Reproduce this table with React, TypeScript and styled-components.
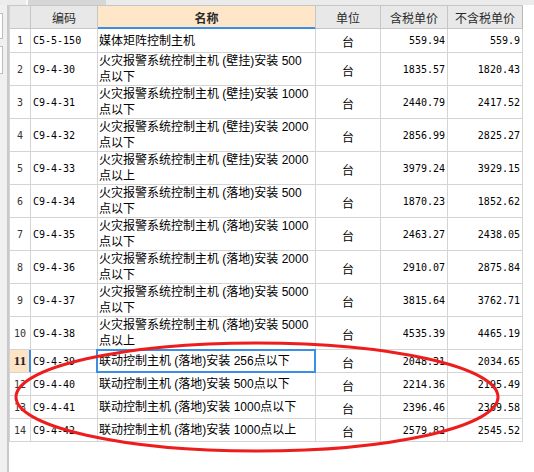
import React from "react";
import styled, { createGlobalStyle, css } from "styled-components";

const COLS = "21px 67px 218px 65px 67px 75px";
const GRID = "#d4d4d4";
const HEAD_LINE = "#c6c6c6";
const BLUE = "#3a8ee6";
const PEACH = "#fde4c6";

const GlobalStyle = createGlobalStyle`
  html, body { margin: 0; padding: 0; background: #ffffff; }
  body { font-family: "Noto Sans CJK SC", sans-serif; }
`;

const Page = styled.div`
  position: relative;
  width: 534px;
  height: 472px;
  display: flex;
  flex-direction: column;
  overflow: hidden;
  background: #ffffff;
`;

const TopStrip = styled.div`
  height: 5px;
  display: flex;
  flex-shrink: 0;
`;

const StripSeg = styled.div<{ $w?: number; $tone: string }>`
  ${(p) => (p.$w ? css`width: ${p.$w}px;` : css`flex: 1;`)}
  background: ${(p) => p.$tone};
`;

const Body = styled.div`
  flex: 1;
  display: flex;
  min-height: 0;
`;

const LeftPanel = styled.div`
  width: 7px;
  border-right: 2px solid #c9c9c9;
  background: #f0f0f0;
  display: flex;
  flex-direction: column;
  gap: 7px;
  padding-top: 8px;
  flex-shrink: 0;
`;

const PanelBox = styled.div<{ $h: number }>`
  width: 2px;
  height: ${(p) => p.$h}px;
  background: #ffffff;
  border: 1px solid #bdbdbd;
  border-left: none;
`;

const TableArea = styled.div`
  flex: 1;
  background: #ffffff;
`;

const Table = styled.div`
  display: flex;
  flex-direction: column;
  width: max-content;
  border-left: 1px solid ${GRID};
  border-top: 1px solid ${HEAD_LINE};
`;

const Row = styled.div<{ $h: number }>`
  display: grid;
  grid-template-columns: ${COLS};
  height: ${(p) => p.$h}px;
`;

const HeadCell = styled.div<{ $active?: boolean; $last?: boolean }>`
  box-sizing: border-box;
  display: flex;
  align-items: center;
  justify-content: center;
  background: ${(p) => (p.$active ? "#fee6c9" : "#e8e8e8")};
  border-right: 1px solid ${(p) => (p.$last ? "#b9b9b9" : HEAD_LINE)};
  border-bottom: 1px solid ${(p) => (p.$active ? BLUE : HEAD_LINE)};
  ${(p) => p.$active && css`box-shadow: inset 0 -1px 0 ${BLUE};`}
  font-family: "Noto Sans CJK SC", sans-serif;
  font-size: 12px;
  font-weight: ${(p) => (p.$active ? 700 : 400)};
  color: #2a2a2a;
  white-space: nowrap;
`;

const Cell = styled.div`
  box-sizing: border-box;
  display: flex;
  align-items: center;
  border-right: 1px solid ${GRID};
  border-bottom: 1px solid ${GRID};
  overflow: hidden;
  color: #000000;
  white-space: nowrap;
`;

const NumCell = styled(Cell)<{ $current?: boolean }>`
  justify-content: center;
  font-family: "DejaVu Sans Mono", "Liberation Mono", monospace;
  font-size: 10px;
  color: #333333;
  ${(p) =>
    p.$current &&
    css`
      background: ${PEACH};
      border-right-color: ${BLUE};
      box-shadow: inset -1px 0 0 ${BLUE};
      font-family: "Liberation Serif", serif;
      font-size: 13px;
      font-weight: 700;
      color: #222222;
    `}
`;

const CodeCell = styled(Cell)`
  padding-left: 2px;
  font-family: "DejaVu Sans Mono", "Liberation Mono", monospace;
  font-size: 10px;
`;

const NameCell = styled(Cell)<{ $selected?: boolean }>`
  position: relative;
  padding-left: 1px;
  font-family: "Liberation Sans", "Noto Sans CJK SC", sans-serif;
  font-size: 12px;
  line-height: 16px;
  ${(p) =>
    p.$selected &&
    css`
      overflow: visible;
      &::after {
        content: "";
        position: absolute;
        top: -1px;
        left: -2px;
        right: -1px;
        bottom: -1px;
        border: 2px solid ${BLUE};
        pointer-events: none;
      }
    `}
`;

const NameLines = styled.div`
  display: flex;
  flex-direction: column;
`;

const NameLine = styled.span`
  display: block;
  white-space: nowrap;
`;

const UnitCell = styled(Cell)`
  justify-content: center;
  padding-top: 2px;
  font-family: "Noto Sans CJK SC", sans-serif;
  font-size: 12px;
`;

const PriceCell = styled(Cell)`
  justify-content: flex-end;
  padding-right: 2px;
  font-family: "DejaVu Sans Mono", "Liberation Mono", monospace;
  font-size: 10px;
`;

const Overlay = styled.svg`
  position: absolute;
  left: 0;
  top: 0;
  pointer-events: none;
`;

type Item = { n: number; code: string; name: string[]; inc: string; ex: string };

const FA = "火灾报警系统控制主机 ";
const LD = "联动控制主机 (落地)安装 ";

const items: Item[] = [
  { n: 1, code: "C5-5-150", name: ["媒体矩阵控制主机"], inc: "559.94", ex: "559.9" },
  { n: 2, code: "C9-4-30", name: [FA + "(壁挂)安装 500", "点以下"], inc: "1835.57", ex: "1820.43" },
  { n: 3, code: "C9-4-31", name: [FA + "(壁挂)安装 1000", "点以下"], inc: "2440.79", ex: "2417.52" },
  { n: 4, code: "C9-4-32", name: [FA + "(壁挂)安装 2000", "点以下"], inc: "2856.99", ex: "2825.27" },
  { n: 5, code: "C9-4-33", name: [FA + "(壁挂)安装 2000", "点以上"], inc: "3979.24", ex: "3929.15" },
  { n: 6, code: "C9-4-34", name: [FA + "(落地)安装 500", "点以下"], inc: "1870.23", ex: "1852.62" },
  { n: 7, code: "C9-4-35", name: [FA + "(落地)安装 1000", "点以下"], inc: "2463.27", ex: "2438.05" },
  { n: 8, code: "C9-4-36", name: [FA + "(落地)安装 2000", "点以下"], inc: "2910.07", ex: "2875.84" },
  { n: 9, code: "C9-4-37", name: [FA + "(落地)安装 5000", "点以下"], inc: "3815.64", ex: "3762.71" },
  { n: 10, code: "C9-4-38", name: [FA + "(落地)安装 5000", "点以上"], inc: "4535.39", ex: "4465.19" },
  { n: 11, code: "C9-4-39", name: [LD + "256点以下"], inc: "2048.31", ex: "2034.65" },
  { n: 12, code: "C9-4-40", name: [LD + "500点以下"], inc: "2214.36", ex: "2195.49" },
  { n: 13, code: "C9-4-41", name: [LD + "1000点以下"], inc: "2396.46", ex: "2369.58" },
  { n: 14, code: "C9-4-42", name: [LD + "1000点以上"], inc: "2579.82", ex: "2545.52" },
];

const CURRENT = 11;

const rowHeight = (it: Item) => (it.n === 1 ? 24 : it.name.length > 1 ? 33 : 23);

export default function App() {
  return (
    <>
      <GlobalStyle />
      <Page>
        <TopStrip>
          <StripSeg $w={26} $tone="#ececec" />
          <StripSeg $w={2} $tone="#fafafa" />
          <StripSeg $w={78} $tone="#d6d6d6" />
          <StripSeg $tone="#ebebeb" />
        </TopStrip>
        <Body>
          <LeftPanel>
            <PanelBox $h={24} />
            <PanelBox $h={26} />
          </LeftPanel>
          <TableArea>
            <Table>
              <Row $h={23}>
                <HeadCell />
                <HeadCell>编码</HeadCell>
                <HeadCell $active>名称</HeadCell>
                <HeadCell>单位</HeadCell>
                <HeadCell>含税单价</HeadCell>
                <HeadCell $last>不含税单价</HeadCell>
              </Row>
              {items.map((it) => (
                <Row key={it.n} $h={rowHeight(it)}>
                  <NumCell $current={it.n === CURRENT}>{it.n}</NumCell>
                  <CodeCell>{it.code}</CodeCell>
                  <NameCell $selected={it.n === CURRENT}>
                    <NameLines>
                      {it.name.map((line, i) => (
                        <NameLine key={i}>{line}</NameLine>
                      ))}
                    </NameLines>
                  </NameCell>
                  <UnitCell>台</UnitCell>
                  <PriceCell>{it.inc}</PriceCell>
                  <PriceCell>{it.ex}</PriceCell>
                </Row>
              ))}
            </Table>
          </TableArea>
        </Body>
        <Overlay width={534} height={472} viewBox="0 0 534 472">
          <ellipse cx={257} cy={397} rx={241} ry={54} fill="none" stroke="#ee1d1d" strokeWidth={3} />
        </Overlay>
      </Page>
    </>
  );
}
